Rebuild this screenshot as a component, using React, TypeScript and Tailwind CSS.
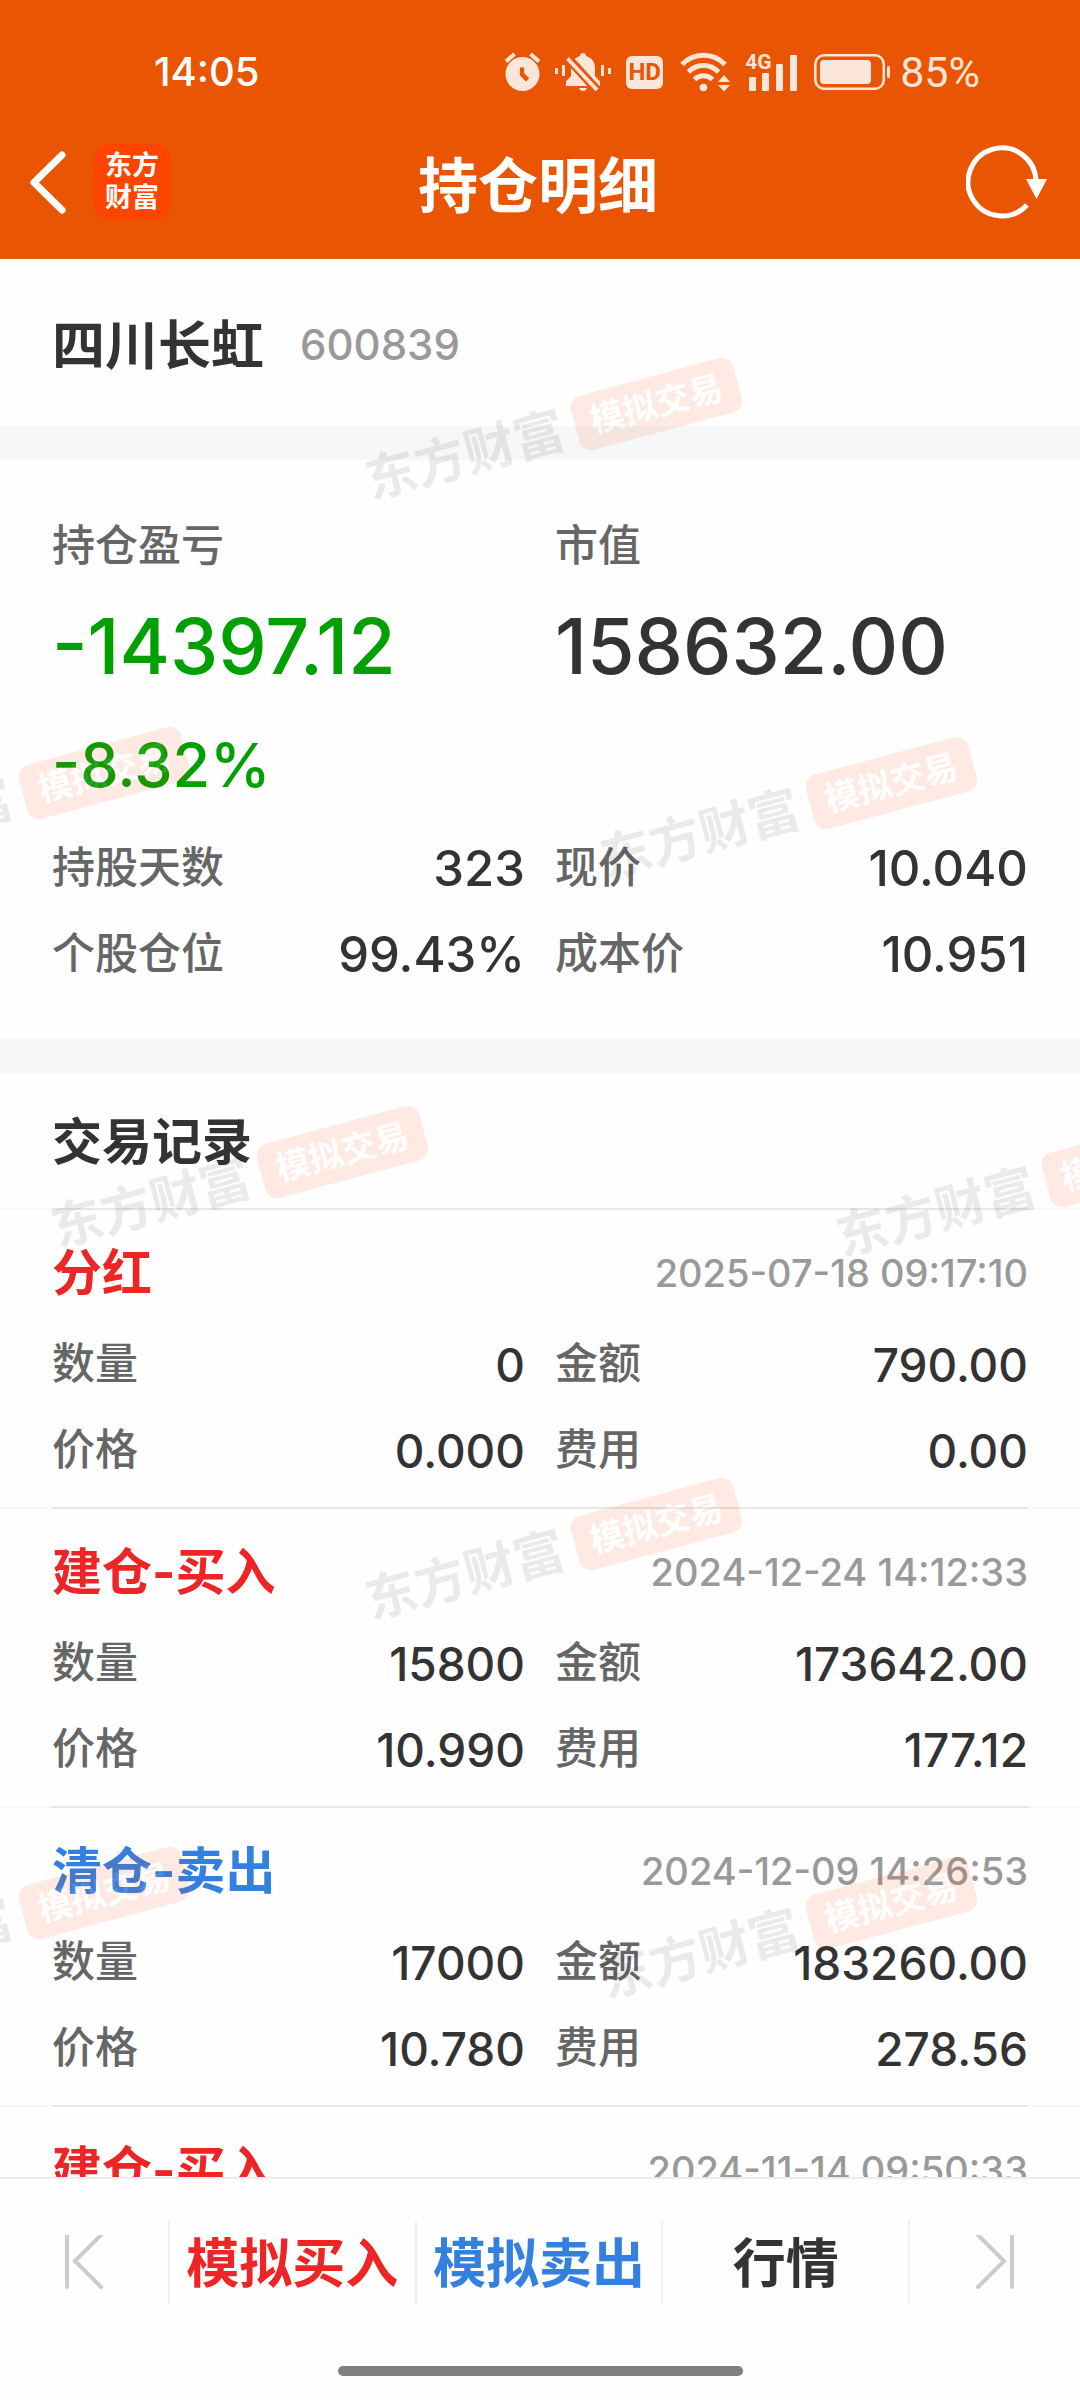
type Field = { label: string; value: string };

type TradeRecord = {
  title: string;
  side: "buy" | "sell";
  time: string;
  fields: Field[];
};

const position: Field[] = [
  { label: "持股天数", value: "323" },
  { label: "现价", value: "10.040" },
  { label: "个股仓位", value: "99.43%" },
  { label: "成本价", value: "10.951" },
];

const records: TradeRecord[] = [
  {
    title: "分红",
    side: "buy",
    time: "2025-07-18 09:17:10",
    fields: [
      { label: "数量", value: "0" },
      { label: "金额", value: "790.00" },
      { label: "价格", value: "0.000" },
      { label: "费用", value: "0.00" },
    ],
  },
  {
    title: "建仓-买入",
    side: "buy",
    time: "2024-12-24 14:12:33",
    fields: [
      { label: "数量", value: "15800" },
      { label: "金额", value: "173642.00" },
      { label: "价格", value: "10.990" },
      { label: "费用", value: "177.12" },
    ],
  },
  {
    title: "清仓-卖出",
    side: "sell",
    time: "2024-12-09 14:26:53",
    fields: [
      { label: "数量", value: "17000" },
      { label: "金额", value: "183260.00" },
      { label: "价格", value: "10.780" },
      { label: "费用", value: "278.56" },
    ],
  },
  {
    title: "建仓-买入",
    side: "buy",
    time: "2024-11-14 09:50:33",
    fields: [],
  },
];

const stamps = [
  "left-[360px] top-[143px]",
  "left-[-192px] top-[512px]",
  "left-[595px] top-[522px]",
  "left-[46px] top-[891px]",
  "left-[831px] top-[900px]",
  "left-[360px] top-[1263px]",
  "left-[-192px] top-[1632px]",
  "left-[595px] top-[1642px]",
];

function StatusBar() {
  return (
    <div className="flex h-[144px] items-center justify-between pr-[100px] pl-[154px]">
      <span className="text-[40px] font-medium text-white">14:05</span>
      <div className="flex items-center text-[#fce5d9]">
        {/* Alarm */}
        <svg width="38" height="40" viewBox="0 0 38 40" className="mr-[13px]" fill="currentColor">
          <path fillRule="evenodd" d="M18.500 5a17 17 0 1 1 0 34a17 17 0 1 1 0-34zM16 15.500v8l6 6 3.200-3.200-5-5v-5.800z" />
          <path d="M2 9.500 10.500 2M35 9.500 26.500 2" stroke="currentColor" strokeWidth="4" />
        </svg>
        {/* Muted bell */}
        <svg width="56" height="40" viewBox="0 0 56 40" className="mr-[15px]" fill="currentColor">
          <path d="M28 1c1.700 0 3 1.300 3 3 5.500 1.500 9 6 9 11.500V24l5 5.500V34H11v-4.500l5-5.500v-8.500C16 10 19.500 5.500 25 4c0-1.700 1.300-3 3-3zM24 36h8c-.5 2-2 3-4 3s-3.500-1-4-3z" />
          <path d="M10 3 43 39" stroke="#ea5504" strokeWidth="9" />
          <path d="M12.500 6.500 42 38" stroke="currentColor" strokeWidth="4" />
          <path d="M1.500 16v6M8.500 13v11M47.500 13v11M54.500 16v6" stroke="currentColor" strokeWidth="3" />
        </svg>
        {/* HD */}
        <span className="mr-[17px] flex h-[33px] w-[37px] items-center justify-center rounded-[6px] bg-[#fce5d9] font-[Roboto] text-[24px] leading-none font-bold text-[#ea5504]">
          HD
        </span>
        {/* Wi-Fi */}
        <svg width="50" height="40" viewBox="0 0 50 40" className="mr-[15px]" fill="none" stroke="currentColor" strokeWidth="5">
          <path d="M2 12.500a29.500 29.500 0 0 1 43 0" />
          <path d="M8.500 20a20.500 20.500 0 0 1 30 0" />
          <path d="M14.500 27.500a12.500 12.500 0 0 1 18 0" />
          <circle cx="23.500" cy="35.500" r="3.800" fill="currentColor" stroke="none" />
          <path d="m44 23 6 7H38zM44 39.500l6-6.500H38z" fill="currentColor" stroke="none" />
        </svg>
        {/* 4G signal */}
        <span className="relative mr-[17px]">
          <span className="absolute top-0 left-0 font-[Roboto] text-[21px] leading-[18px] font-bold">4G</span>
          <svg width="52" height="38" viewBox="0 0 52 38" fill="currentColor">
            <rect x="4" y="24" width="7" height="14" rx="1" />
            <rect x="17" y="20" width="7" height="18" rx="1" />
            <rect x="31" y="11" width="7" height="27" rx="1" />
            <rect x="45" y="2" width="7" height="36" rx="1" />
          </svg>
        </span>
        {/* Battery */}
        <svg width="76" height="36" viewBox="0 0 76 36" className="mr-[10px]" fill="currentColor">
          <rect x="1.300" y="1.300" width="68.500" height="33.500" rx="9" fill="none" stroke="currentColor" strokeWidth="2.500" />
          <rect x="6" y="6" width="51" height="24" rx="4" />
          <rect x="73" y="12" width="3" height="12" rx="1.500" />
        </svg>
        <span className="font-[Roboto] text-[43px] leading-none">85%</span>
      </div>
    </div>
  );
}

function NavBar() {
  return (
    <div className="flex h-[115px] items-start justify-between pr-8 pl-7">
      <div className="flex flex-1 items-center gap-7">
        <button type="button" aria-label="返回">
          <svg width="38" height="76" viewBox="0 0 38 76" fill="none" stroke="white" strokeWidth="7" strokeLinecap="round" strokeLinejoin="round">
            <path d="M34 11 6 38.500 34 66" />
          </svg>
        </button>
        <a href="#" className="flex h-[76px] w-[76px] flex-col items-center justify-center rounded-[14px] bg-[#ff4400] text-[27px] leading-8 font-bold text-white">
          <span>东方</span>
          <span>财富</span>
        </a>
      </div>
      <h1 className="text-[60px] leading-[84px] font-bold text-white">持仓明细</h1>
      <div className="flex flex-1 justify-end">
        <button type="button" aria-label="刷新">
          <svg width="82" height="76" viewBox="0 0 82 76" fill="none">
            <path d="M70 37A34 34 0 1 0 61 61" stroke="white" strokeWidth="5" />
            <path d="M60 35h21L70.500 55z" fill="white" />
          </svg>
        </button>
      </div>
    </div>
  );
}

function FieldGrid({ fields, large = false }: { fields: Field[]; large?: boolean }) {
  return (
    <dl className="grid grid-cols-2 gap-x-[30px]">
      {fields.map((f) => (
        <div key={f.label} className="flex h-[86px] items-center justify-between">
          <dt className="text-[43px] font-medium text-[#666]">{f.label}</dt>
          <dd className={large ? "pt-1 text-[49px] font-medium" : "pt-1 text-[46px] font-medium"}>{f.value}</dd>
        </div>
      ))}
    </dl>
  );
}

function RecordItem({ record }: { record: TradeRecord }) {
  return (
    <li>
      <div className="bg-[#f8f8f8] px-13">
        <div className="h-[2px] bg-[#e6e6e6]" />
      </div>
      <div className="px-13 pt-5 pb-[15px]">
        <div className="mb-1 flex h-[86px] items-center justify-between">
          <h3 className={record.side === "buy" ? "text-[50px] font-bold text-[#ee2525]" : "text-[50px] font-bold text-[#3380e0]"}>
            {record.title}
          </h3>
          <time className="text-[38px] font-medium text-[#999]">{record.time}</time>
        </div>
        <FieldGrid fields={record.fields} />
      </div>
    </li>
  );
}

function Stamp({ className }: { className: string }) {
  return (
    <div className={`pointer-events-none absolute flex -rotate-15 items-center gap-3 whitespace-nowrap ${className}`} aria-hidden="true">
      <span className="text-[51px] leading-[60px] font-bold text-black/8">东方财富</span>
      <span className="rounded-xl bg-[#ff4400] px-4 text-[34px] leading-[56px] font-bold text-white opacity-10">模拟交易</span>
    </div>
  );
}

function BottomBar() {
  return (
    <footer className="relative border-t-2 border-[#ececec] bg-[#fefefe]">
      <nav className="flex h-[168px] items-center divide-x-2 divide-[#f0f0f0] text-[53px] font-bold">
        <button type="button" aria-label="上一个" className="flex h-[84px] w-[170px] items-center justify-center">
          <svg width="40" height="56" viewBox="0 0 40 56" fill="none" stroke="#ccc" strokeWidth="4" strokeLinecap="round">
            <path d="M3 0v52M37 0 11 26l26 26" />
          </svg>
        </button>
        <button type="button" className="h-[84px] flex-1 leading-[86px] whitespace-nowrap text-[#ee2525]">模拟买入</button>
        <button type="button" className="h-[84px] flex-1 leading-[86px] whitespace-nowrap text-[#3380e0]">模拟卖出</button>
        <button type="button" className="h-[84px] flex-1 leading-[86px] whitespace-nowrap text-[#333]">行情</button>
        <button type="button" aria-label="下一个" className="flex h-[84px] w-[170px] items-center justify-center">
          <svg width="40" height="56" viewBox="0 0 40 56" fill="none" stroke="#ccc" strokeWidth="4" strokeLinecap="round">
            <path d="M37 0v52M3 0l26 26L3 52" />
          </svg>
        </button>
      </nav>
      <div className="flex justify-center pt-[19px] pb-6">
        <div className="h-[10px] w-3/8 rounded-full bg-[#808080]" />
      </div>
    </footer>
  );
}

export default function App() {
  return (
    <div className="flex h-screen flex-col overflow-hidden bg-[#fefefe] font-['Inter','Noto_Sans_CJK_SC',sans-serif] text-[#333]">
      <header className="bg-[#ea5504]">
        <StatusBar />
        <NavBar />
      </header>

      <main className="relative min-h-0 flex-1 overflow-hidden">
        <section className="flex h-[167px] items-center gap-9 px-13 pt-1">
          <h2 className="pt-1 text-[53px] font-bold">四川长虹</h2>
          <span className="text-[42px] font-medium text-[#999]">600839</span>
        </section>

        {/* Position summary */}
        <section className="border-y-34 border-[#f6f7f9] px-13 pt-10 pb-[43px]">
          <div className="grid grid-cols-2 gap-x-[30px]">
            <div>
              <p className="text-[43px] leading-[90px] font-medium text-[#666]">持仓盈亏</p>
              <p className="text-[77px] leading-[112px] font-medium text-[#00a000]">-14397.12</p>
              <p className="pt-1 text-[61px] leading-[118px] font-medium text-[#00a000]">-8.32%</p>
            </div>
            <div>
              <p className="text-[43px] leading-[90px] font-medium text-[#666]">市值</p>
              <p className="text-[77px] leading-[112px] font-medium">158632.00</p>
            </div>
          </div>
          <FieldGrid fields={position} large />
        </section>

        {/* Trade history */}
        <section>
          <h2 className="px-13 pt-1 text-[50px] leading-[131px] font-bold">交易记录</h2>
          <ul>
            {records.map((r) => (
              <RecordItem key={r.time} record={r} />
            ))}
          </ul>
        </section>

        {stamps.map((s) => (
          <Stamp key={s} className={s} />
        ))}
      </main>

      <BottomBar />
    </div>
  );
}
